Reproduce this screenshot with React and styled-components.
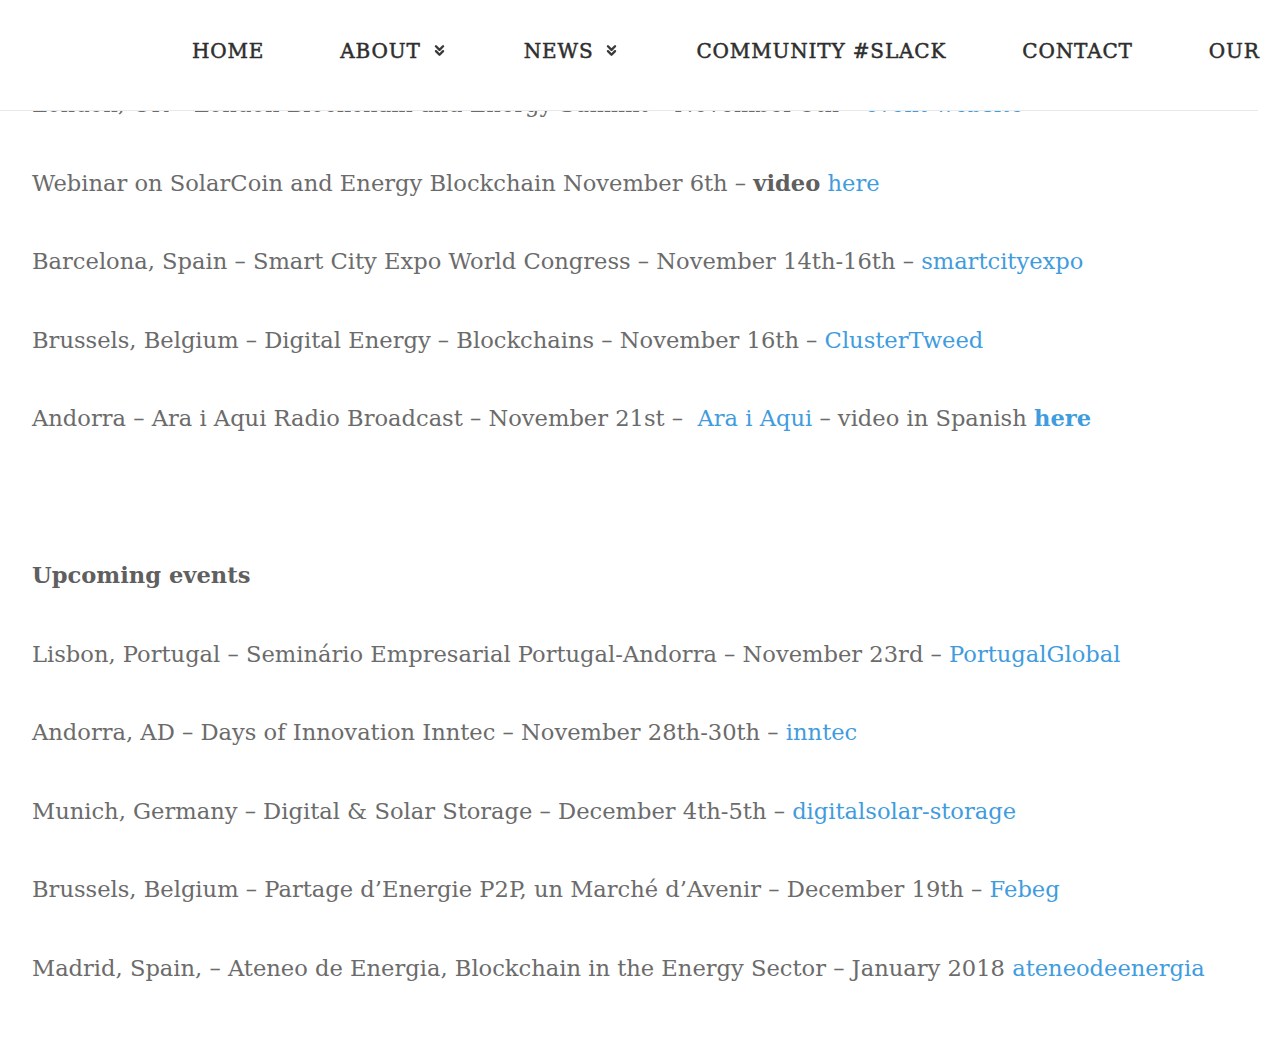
import styled, { createGlobalStyle } from 'styled-components';
import { ChevronsDown } from 'lucide-react';

const GlobalStyle = createGlobalStyle`
	html, body {
		margin: 0;
		padding: 0;
		background: #ffffff;
	}
`;

const navItems = [
	{ label: 'HOME' },
	{ label: 'ABOUT', menu: true },
	{ label: 'NEWS', menu: true },
	{ label: 'COMMUNITY #SLACK' },
	{ label: 'CONTACT' },
	{ label: 'OUR' },
];

export default function App() {
	return (
		<Page>
			<GlobalStyle />
			<Header>
				<Nav>
					{navItems.map((item) => (
						<NavItem key={item.label}>
							{item.label}
							{item.menu && <ChevronsDown size={17} strokeWidth={3.4} />}
						</NavItem>
					))}
				</Nav>
			</Header>

			<Content>
				<P>
					London, UK – London Blockchain and Energy Summit – November 9th –{' '}
					<A>event website</A>
				</P>
				<P>
					Webinar on SolarCoin and Energy Blockchain November 6th – <Strong>video</Strong>{' '}
					<A>here</A>
				</P>
				<P>
					Barcelona, Spain – Smart City Expo World Congress – November 14th-16th –{' '}
					<A>smartcityexpo</A>
				</P>
				<P>
					Brussels, Belgium – Digital Energy – Blockchains – November 16th – <A>ClusterTweed</A>
				</P>
				<P>
					Andorra – Ara i Aqui Radio Broadcast – November 21st – &nbsp;<A>Ara i Aqui</A> – video
					in Spanish <A bold>here</A>
				</P>
				<P>&nbsp;</P>
				<P>
					<Strong>Upcoming events</Strong>
				</P>
				<P>
					Lisbon, Portugal – Seminário Empresarial Portugal-Andorra – November 23rd –{' '}
					<A>PortugalGlobal</A>
				</P>
				<P>
					Andorra, AD – Days of Innovation Inntec – November 28th-30th – <A>inntec</A>
				</P>
				<P>
					Munich, Germany – Digital &amp; Solar Storage – December 4th-5th –{' '}
					<A>digitalsolar-storage</A>
				</P>
				<P>
					Brussels, Belgium – Partage d’Energie P2P, un Marché d’Avenir – December 19th –{' '}
					<A>Febeg</A>
				</P>
				<P>
					Madrid, Spain, – Ateneo de Energia, Blockchain in the Energy Sector – January 2018{' '}
					<A>ateneodeenergia</A>
				</P>
			</Content>
		</Page>
	);
}

const Page = styled.div`
	position: relative;
	width: 1280px;
	height: 1038px;
	overflow: hidden;
	background: #ffffff;
`;

const Header = styled.header`
	position: absolute;
	top: 0;
	left: 0;
	width: 1258px;
	height: 110px;
	background: #ffffff;
	border-bottom: 1px solid #e9e9e9;
	z-index: 2;
`;

const Nav = styled.ul`
	display: flex;
	align-items: center;
	gap: 76px;
	margin: 0;
	padding: 0 0 0 192px;
	height: 102px;
	list-style: none;
	white-space: nowrap;
`;

const NavItem = styled.li`
	display: flex;
	align-items: center;
	gap: 10px;
	font-family: 'DejaVu Serif', 'Liberation Serif', serif;
	font-size: 20px;
	letter-spacing: 0.85px;
	color: #2e2e2e;
	-webkit-text-stroke: 0.5px #2e2e2e;

	svg {
		color: #3a3a3a;
		margin-top: -2px;
	}
`;

const Content = styled.main`
	padding: 84px 0 0 32px;
`;

const P = styled.p`
	margin: 0 0 38.5px;
	line-height: 40px;
	font-family: 'DejaVu Serif', 'Liberation Serif', serif;
	font-size: 22.6px;
	color: #6b6b6b;
	white-space: nowrap;
`;

const Strong = styled.strong`
	font-weight: bold;
	color: #5f5f5f;
`;

const A = styled.a`
	color: #3f9cde;
	font-weight: ${(props) => (props.bold ? 'bold' : 'normal')};
	text-decoration: none;
	cursor: pointer;
`;
